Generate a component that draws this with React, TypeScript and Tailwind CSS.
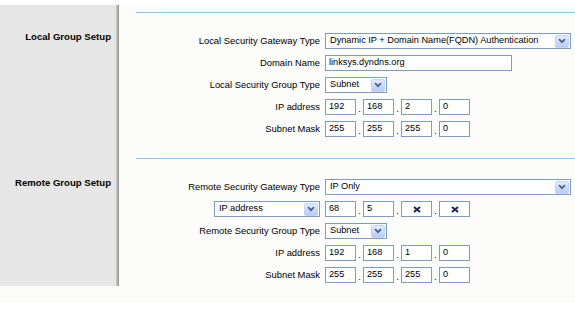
import React from "react";

const font = { fontFamily: '"Liberation Sans", Arial, sans-serif' };

const Arrow = () => (
    <div className="flex items-center justify-center w-[14px] h-[13px] mr-px rounded-[2px] border border-[#c3d3fd] bg-gradient-to-b from-[#e3ebff] to-[#b7cbf7]">
        <svg width="8" height="6" viewBox="0 0 8 6">
            <path d="M1 1.2 L4 4.2 L7 1.2" fill="none" stroke="#4d6185" strokeWidth="1.8" />
        </svg>
    </div>
);

const Select = ({ w, value }: { w: string; value: string }) => (
    <div className={`flex items-center h-[16px] border border-[#7f9db9] bg-white ${w}`}>
        <span className="flex-1 pl-[4px] text-[9.2px] text-black whitespace-nowrap overflow-hidden">{value}</span>
        <Arrow />
    </div>
);

const Box = ({ value, w = "w-[31px]" }: { value: React.ReactNode; w?: string }) => (
    <div className={`flex items-center h-[16px] border border-[#7f9db9] bg-white pl-[3px] text-[9.2px] text-black ${w}`}>
        {value}
    </div>
);

const Cross = () => (
    <div className="flex items-center justify-center h-[16px] w-[31px] border border-[#7f9db9] bg-white">
        <svg width="8" height="7" viewBox="0 0 8 7">
            <path d="M1 1 L7 6 M7 1 L1 6" stroke="#1b2757" strokeWidth="2" />
        </svg>
    </div>
);

const Dot = () => (
    <div className="w-[7px] h-[16px] flex items-end justify-center text-[9px] leading-[12px] text-black">.</div>
);

const IpGroup = ({ values }: { values: React.ReactNode[] }) => (
    <div className="flex items-center">
        {values.map((v, i) => (
            <React.Fragment key={i}>
                {i > 0 && <Dot />}
                {v === "x" ? <Cross /> : <Box value={v} />}
            </React.Fragment>
        ))}
    </div>
);

const Row = ({ label, children }: { label: React.ReactNode; children: React.ReactNode }) => (
    <div className="flex items-center h-[22px]">
        <div className="w-[201px] flex justify-end text-[9.4px] text-black whitespace-nowrap">{label}</div>
        <div className="ml-[5px] flex items-center">{children}</div>
    </div>
);

const Section = ({ title, titleTop, lineTop, rows }: { title: string; titleTop: string; lineTop: string; rows: React.ReactNode }) => (
    <div className="flex">
        <div className="flex w-[119px]">
            <div className={`w-[116px] bg-[#e6e6e6] text-right pr-[5px] text-[9.6px] leading-[12px] font-bold text-black ${titleTop}`}>
                {title}
            </div>
            <div className="w-[3px] bg-gradient-to-r from-[#d2d2d2] to-[#8e8e8e]" />
        </div>
        <div className={`flex-1 bg-[#fcfcfa] ${lineTop}`}>
            <div className="ml-[17px] h-px bg-[#93c1ea]" />
            <div className="mt-[17px]">{rows}</div>
        </div>
    </div>
);

export default function App() {
    return (
        <div className="w-[575px] h-[310px] bg-white pt-[5px] overflow-hidden" style={font}>
            <Section
                title="Local Group Setup"
                titleTop="pt-[26px]"
                lineTop="pt-[7px]"
                rows={
                    <>
                        <Row label="Local Security Gateway Type">
                            <Select w="w-[246px]" value="Dynamic IP + Domain Name(FQDN) Authentication" />
                        </Row>
                        <Row label="Domain Name">
                            <Box w="w-[187px]" value="linksys.dyndns.org" />
                        </Row>
                        <Row label="Local Security Group Type">
                            <Select w="w-[62px]" value="Subnet" />
                        </Row>
                        <Row label="IP address">
                            <IpGroup values={["192", "168", "2", "0"]} />
                        </Row>
                        <Row label="Subnet Mask">
                            <IpGroup values={["255", "255", "255", "0"]} />
                        </Row>
                    </>
                }
            />
            <div className="pb-[17px] bg-[#fcfcfa]">
                <Section
                    title="Remote Group Setup"
                    titleTop="pt-[37px]"
                    lineTop="pt-[18px]"
                    rows={
                        <>
                            <Row label="Remote Security Gateway Type">
                                <Select w="w-[246px]" value="IP Only" />
                            </Row>
                            <Row label={<Select w="w-[106px]" value="IP address" />}>
                                <IpGroup values={["68", "5", "x", "x"]} />
                            </Row>
                            <Row label="Remote Security Group Type">
                                <Select w="w-[62px]" value="Subnet" />
                            </Row>
                            <Row label="IP address">
                                <IpGroup values={["192", "168", "1", "0"]} />
                            </Row>
                            <Row label="Subnet Mask">
                                <IpGroup values={["255", "255", "255", "0"]} />
                            </Row>
                        </>
                    }
                />
            </div>
        </div>
    );
}
